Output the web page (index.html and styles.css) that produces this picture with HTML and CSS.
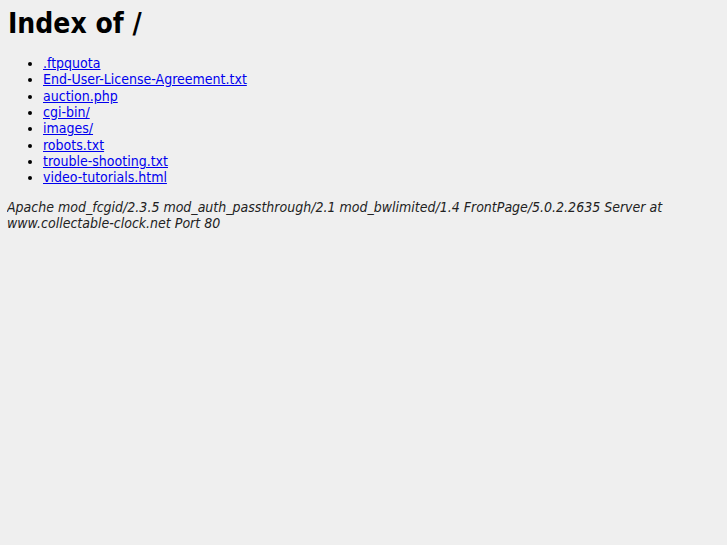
FILE: index.html
```html
<!DOCTYPE html>
<html>
<head>
<title>Index of /</title>
<link rel="stylesheet" href="styles.css">
</head>
<body>
<h1 class="title">Index of /</h1>
<ul class="listing">
<li><a href="#">.ftpquota</a></li>
<li><a href="#">End-User-License-Agreement.txt</a></li>
<li><a href="#">auction.php</a></li>
<li><a href="#">cgi-bin/</a></li>
<li><a href="#">images/</a></li>
<li><a href="#">robots.txt</a></li>
<li><a href="#">trouble-shooting.txt</a></li>
<li><a href="#">video-tutorials.html</a></li>
</ul>
<address class="sig">Apache mod_fcgid/2.3.5 mod_auth_passthrough/2.1 mod_bwlimited/1.4 FrontPage/5.0.2.2635 Server at www.collectable-clock.net Port 80</address>
</body>
</html>
```
FILE: styles.css
```css
html {
  background: #efefef;
}
body {
  margin: 8px 7px;
  font-family: "DejaVu Sans Condensed", "DejaVu Sans", sans-serif;
  font-stretch: condensed;
  font-size: 14px;
  line-height: 16.33px;
  color: #000;
}
.title {
  font-size: 28px;
  line-height: 32px;
  margin: 0;
  padding-left: 1px;
}
.listing {
  margin: 15px 0 13px 0;
  padding-left: 36px;
}
.listing a {
  color: #0000ee;
}
.sig {
  color: #222;
}
```
